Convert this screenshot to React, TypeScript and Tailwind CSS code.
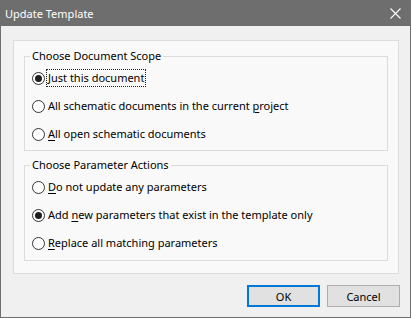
import React from "react";

function Radio({
  children,
  checked,
  focused,
}: {
  children: React.ReactNode;
  checked?: boolean;
  focused?: boolean;
}) {
  return (
    <div className="flex items-center h-[16px]">
      <span className="w-[13px] h-[13px] rounded-full border border-[#333333] bg-white flex items-center justify-center shrink-0">
        {checked && <span className="w-[7px] h-[7px] rounded-full bg-[#1f1f1f]" />}
      </span>
      <span
        className={
          focused
            ? "ml-[1px] h-[18px] leading-[16px] border border-dotted border-[#222] px-[1px] whitespace-nowrap"
            : "ml-[2px] leading-[16px] px-[1px] whitespace-nowrap"
        }
      >
        {children}
      </span>
    </div>
  );
}

function U({ children }: { children: React.ReactNode }) {
  return <span className="underline underline-offset-[2px] decoration-1">{children}</span>;
}

function Group({
  title,
  children,
  pb,
}: {
  title: string;
  children: React.ReactNode;
  pb: string;
}) {
  return (
    <div className="flex flex-col">
      <div className="flex h-[16px]">
        <div className="w-[6px] h-[8px] mt-[8px] border-l border-t border-[#dcdcdc]" />
        <span className="px-[2px] leading-[16px] whitespace-nowrap">{title}</span>
        <div className="flex-1 h-[8px] mt-[8px] border-r border-t border-[#dcdcdc]" />
      </div>
      <div className={`flex flex-col gap-[12px] pl-[7px] pt-[6px] border-x border-b border-[#dcdcdc] ${pb}`}>
        {children}
      </div>
    </div>
  );
}

export default function App() {
  return (
    <div className="w-[411px] h-[318px] flex flex-col bg-[#f0f0f0] border-x border-b border-[#6e6e6e] text-[11px] text-black font-['Noto_Sans',sans-serif]">
      <div className="h-[26px] -mx-[1px] bg-[#6e6e6e] flex items-center justify-between pl-[5px] pr-[10px] text-white">
        <span className="leading-[16px] pt-[1px] text-[11px]">Update Template</span>
        <svg width="11" height="11" viewBox="0 0 11 11" className="mt-[1px]">
          <path d="M0.5 0.5 L10.5 10.5 M10.5 0.5 L0.5 10.5" stroke="#ffffff" strokeWidth="1.1" />
        </svg>
      </div>
      <div className="ml-[12px] mt-[14px] w-[386px] border border-[#dcdcdc] bg-[#f9f9f9] px-[10px] pt-[7px] pb-[12px] flex flex-col gap-[6px]">
        <Group title="Choose Document Scope" pb="pb-[8px]">
          <Radio checked focused>
            Just this document
          </Radio>
          <Radio>
            All schematic documents in the current <U>p</U>roject
          </Radio>
          <Radio>
            <U>A</U>ll open schematic documents
          </Radio>
        </Group>
        <Group title="Choose Parameter Actions" pb="pb-[9px]">
          <Radio>
            <U>D</U>o not update any parameters
          </Radio>
          <Radio checked>
            Add <U>n</U>ew parameters that exist in the template only
          </Radio>
          <Radio>
            <U>R</U>eplace all matching parameters
          </Radio>
        </Group>
      </div>
      <div className="flex justify-end gap-[7px] mt-[11px] mr-[10px]">
        <button className="w-[73px] h-[22px] bg-[#e1e1e1] border-2 border-[#0078d7] leading-none">
          OK
        </button>
        <button className="w-[73px] h-[22px] bg-[#e1e1e1] border border-[#adadad] leading-none">
          Cancel
        </button>
      </div>
    </div>
  );
}
